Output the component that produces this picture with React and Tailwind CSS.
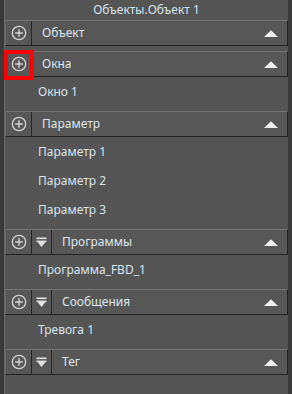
const SECTIONS = [
  { title: "Объект", items: [] },
  { title: "Окна", items: ["Окно 1"], marked: true },
  { title: "Параметр", items: ["Параметр 1", "Параметр 2", "Параметр 3"] },
  { title: "Программы", items: ["Программа_FBD_1"], sort: true },
  { title: "Сообщения", items: ["Тревога 1"], sort: true },
  { title: "Тег", items: [], sort: true },
];

function PlusIcon() {
  return (
    <svg width="16" height="16" viewBox="0 0 16 16" fill="none">
      <circle cx="8" cy="8" r="6.7" stroke="#d4d4d4" strokeWidth="1.3" />
      <path d="M8 4.2v7.6M4.2 8h7.6" stroke="#d4d4d4" strokeWidth="1.4" />
    </svg>
  );
}

function SortIcon() {
  return (
    <svg width="11" height="11" viewBox="0 0 11 11">
      <rect x="0.5" y="0.5" width="10" height="1.6" fill="#e4e4e4" />
      <rect x="0.5" y="3.6" width="10" height="1.4" fill="#e4e4e4" />
      <path d="M1.5 5h8L5.5 10z" fill="#e4e4e4" />
    </svg>
  );
}

function Header({ section }) {
  return (
    <div className="relative h-[26px] flex items-stretch bg-[#575757] border-t border-t-[#747474] border-b border-b-[#222] border-r border-r-[#222] border-l border-l-[#6a6a6a]">
      <div className="w-[26px] flex items-center justify-center border-r border-r-[#262626]">
        <PlusIcon />
      </div>
      {section.sort && (
        <div className="w-[20px] flex items-center justify-center border-r border-r-[#262626]">
          <SortIcon />
        </div>
      )}
      <div className="flex-1 flex items-center pl-[10px] text-[12px] text-[#dde6ee]">{section.title}</div>
      <div className="w-[30px] flex items-center justify-center pr-[2px]">
        <svg width="14" height="7" viewBox="0 0 14 7">
          <path d="M0 7L7 0.3L14 7z" fill="#f0f0f0" />
        </svg>
      </div>
      {section.marked && (
        <div className="absolute left-[-2px] top-[-2px] w-[30px] h-[30px] border-4 border-[#ff0000]" />
      )}
    </div>
  );
}

export default function App() {
  return (
    <div
      className="w-[292px] h-[394px] bg-[#3a3a3a] px-[4px] overflow-hidden"
      style={{ fontFamily: '"Noto Sans", "Open Sans", sans-serif' }}
    >
      <div className="h-full bg-[#555555] border-l border-l-[#686868] flex flex-col">
        <div className="h-[20px] flex items-center justify-center text-[12px] text-[#d8e3ec]">Объекты.Объект 1</div>
        {SECTIONS.map((s) => (
          <div key={s.title} className="pb-[5px]">
            <Header section={s} />
            {s.items.map((it) => (
              <div key={it} className="h-[29px] flex items-center pl-[33px] text-[12px] text-[#d8e4ee]">
                {it}
              </div>
            ))}
          </div>
        ))}
      </div>
    </div>
  );
}
